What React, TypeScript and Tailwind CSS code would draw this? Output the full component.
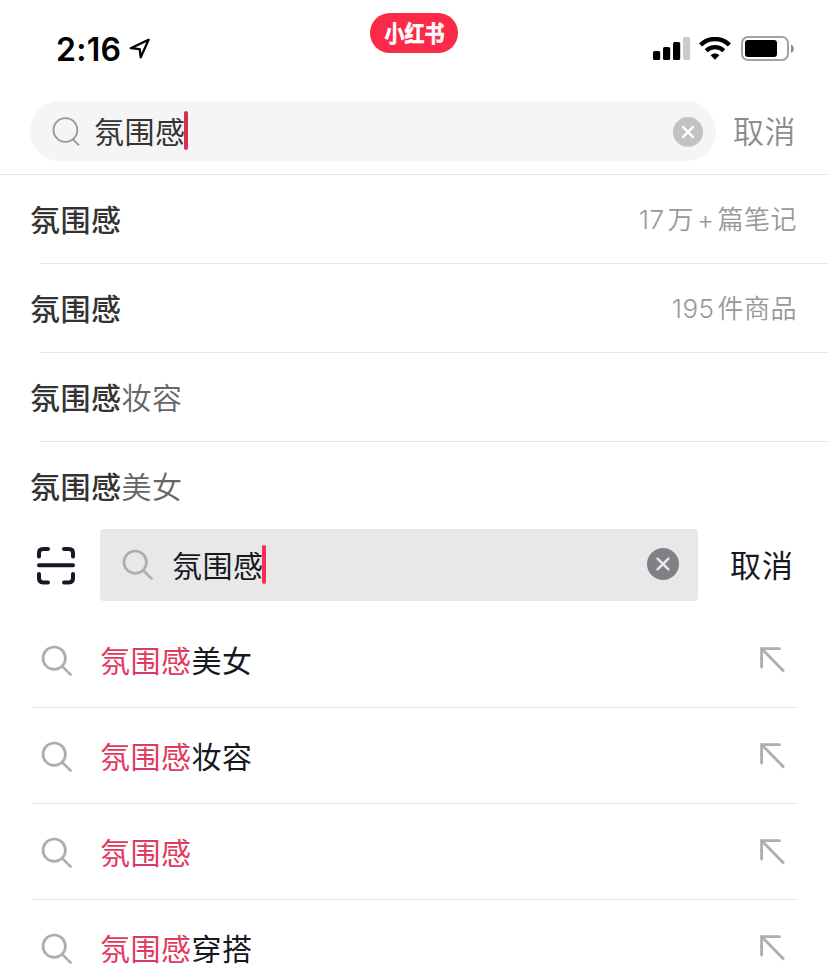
import React from 'react';

interface IconProps {
  className?: string;
}

interface TopSuggestion {
  suffix?: string;
  count?: string[];
}

const KEYWORD = '氛围感';

const topSuggestions: TopSuggestion[] = [
  { count: ['17', '万', '+', '篇笔记'] },
  { count: ['195', '件商品'] },
  { suffix: '妆容' },
  { suffix: '美女' },
];

const bottomSuggestions = ['美女', '妆容', '', '穿搭'];

const LocationIcon: React.FC<IconProps> = ({ className }) => (
  <svg className={className} width="22" height="22" viewBox="0 0 22 22" fill="none">
    <path d="M1.7 10.2 L19.6 1.8 L11.7 19.4 L10.7 11.2 Z" stroke="#000" strokeWidth="2.3" strokeLinejoin="round" />
  </svg>
);

const SignalIcon: React.FC<IconProps> = ({ className }) => (
  <svg className={className} width="38" height="24" viewBox="0 0 38 24">
    <rect x="0" y="14" width="7.2" height="9" rx="1.6" />
    <rect x="10" y="10" width="7.2" height="13" rx="1.6" />
    <rect x="20" y="5" width="7.2" height="18" rx="1.6" />
    <rect x="30" y="0" width="7.2" height="23" rx="1.6" fill="#cbcbcb" />
  </svg>
);

const WifiIcon: React.FC<IconProps> = ({ className }) => (
  <svg className={className} width="32" height="24" viewBox="0 0 32 24" fill="none">
    <path d="M1.6 8 C9.6 0 22.4 0 30.4 8" stroke="#000" strokeWidth="4.4" />
    <path d="M7.2 13.8 C12.3 9 19.7 9 24.8 13.8" stroke="#000" strokeWidth="4.2" />
    <path d="M11.6 18.2 C14 15.8 18 15.8 20.4 18.2 L16 22.8 Z" fill="#000" />
  </svg>
);

const BatteryIcon: React.FC<IconProps> = ({ className }) => (
  <svg className={className} width="54" height="26" viewBox="0 0 54 26">
    <rect x="1" y="1" width="46" height="23" rx="6" fill="none" stroke="#a3a3a3" strokeWidth="2" />
    <rect x="4" y="4" width="32" height="17" rx="3" />
    <path d="M50 8.5 C53.8 10 53.8 15.5 50 17 Z" fill="#8f8f8f" />
  </svg>
);

const ThinSearchIcon: React.FC<IconProps> = ({ className }) => (
  <svg className={className} width="28" height="30" viewBox="0 0 28 30" fill="none" stroke="#999" strokeWidth="1.9">
    <circle cx="13.4" cy="13" r="11.9" />
    <path d="M20.6 21.8 L27 28.4" />
  </svg>
);

const SearchIcon: React.FC<IconProps> = ({ className }) => (
  <svg className={className} width="32" height="32" viewBox="0 0 32 32" fill="none" stroke="#adadad" strokeWidth="2.7" strokeLinecap="round">
    <circle cx="13.2" cy="13.2" r="11.2" />
    <path d="M21.5 21.6 L29.6 29.6" />
  </svg>
);

const ClearIcon: React.FC<{ size: number; fill: string; cross: string }> = ({ size, fill, cross }) => (
  <svg width={size} height={size} viewBox="0 0 32 32">
    <circle cx="16" cy="16" r="16" fill={fill} />
    <path d="M10.6 10.6 L21.4 21.4 M21.4 10.6 L10.6 21.4" stroke={cross} strokeWidth="2.6" strokeLinecap="round" />
  </svg>
);

const ScanIcon: React.FC<IconProps> = ({ className }) => (
  <svg className={className} width="38" height="38" viewBox="0 0 38 38" fill="none" stroke="#161823" strokeWidth="4" strokeLinecap="round">
    <path d="M2 9.5 V6 Q2 2 6 2 H11" />
    <path d="M27 2 H32 Q36 2 36 6 V9.5" />
    <path d="M36 27 V31 Q36 35.4 32 35.4 H27" />
    <path d="M11 35.4 H6 Q2 35.4 2 31 V27" />
    <path d="M2 18.3 H36" />
  </svg>
);

const FillArrowIcon: React.FC<IconProps> = ({ className }) => (
  <svg className={className} width="26" height="26" viewBox="0 0 26 26" fill="none" stroke="#adadad" strokeWidth="2.8">
    <path d="M19.6 1.6 H1.6 V20" strokeLinecap="round" />
    <path d="M2 2 L24 24.4" />
  </svg>
);

const StatusBar: React.FC = () => (
  <div className="grid h-[101px] grid-cols-[1fr_88px_1fr]">
    <div className="flex h-[97px] items-center pl-[56px]">
      <span className="mt-[2px] font-[Inter] text-[32px] font-semibold leading-none tracking-[0.3px] text-black">2:16</span>
      <LocationIcon className="ml-2" />
    </div>
    <div className="mt-[13px] flex h-10 items-center justify-center rounded-full bg-[#fb2a49]">
      <span className="-mt-[2px] scale-x-[0.87] text-[23px] font-bold leading-none tracking-normal text-white [-webkit-text-stroke:0.6px_white]">小红书</span>
    </div>
    <div className="flex h-[97px] items-center justify-end pr-[33px]">
      <SignalIcon />
      <WifiIcon className="ml-[8px]" />
      <BatteryIcon className="ml-[10px]" />
    </div>
  </div>
);

const TopSearch: React.FC = () => (
  <div className="flex items-center border-b border-[#e6e6e6] pb-[13px] pl-[30px]">
    <div className="flex h-[60px] w-[686px] items-center rounded-full bg-[#f5f5f5] pl-[22px] pr-[13px]">
      <ThinSearchIcon className="mt-px" />
      <span className="-mt-[2px] ml-[14px] text-[#333]">{KEYWORD}</span>
      <span className="-ml-[2px] -mt-px h-[39px] w-1 rounded-full bg-[#db3049]" />
      <span className="ml-auto mt-[2px]">
        <ClearIcon size={30} fill="#c2c2c2" cross="#fff" />
      </span>
    </div>
    <span className="-mt-[3px] ml-[17px] text-[31px] font-[350] text-[#8c8c8c]">取消</span>
  </div>
);

const TopList: React.FC = () => (
  <ul>
    {topSuggestions.map((item, i) => (
      <li key={i} className="group">
        <div className="flex h-[88px] items-center justify-between pl-[30px] pr-[31px] group-last:h-[87px] group-last:pt-px">
          <span className="-mt-[2px]">
            <span className="font-medium text-[#333]">{KEYWORD}</span>
            {item.suffix && <span className="font-[350] text-[#666]">{item.suffix}</span>}
          </span>
          {item.count && (
            <span className="mt-[2px] flex gap-[3px] text-[26px] font-[350] tracking-[0.5px] text-[#999]">
              {item.count.map((part) => (
                <span key={part} className="font-[Inter,'Noto_Sans_CJK_SC',sans-serif]">{part}</span>
              ))}
            </span>
          )}
        </div>
        <div className="ml-10 h-px bg-[#e6e6e6] group-last:hidden" />
      </li>
    ))}
  </ul>
);

const BottomSearch: React.FC = () => (
  <div className="flex h-[72px] items-center pl-[37px]">
    <ScanIcon className="mt-[2px]" />
    <div className="ml-[25px] flex h-full w-[598px] items-center rounded bg-[#e8e8e8] pl-[22px] pr-[19px]">
      <SearchIcon />
      <span className="-mt-[2px] ml-[18px] text-[#161823]">{KEYWORD}</span>
      <span className="-ml-[2px] -mt-px h-[39px] w-1 rounded-full bg-[#fe2c55]" />
      <span className="mb-[2px] ml-auto">
        <ClearIcon size={32} fill="#808186" cross="#e8e8e8" />
      </span>
    </div>
    <span className="-mt-[3px] ml-8 text-[31px] tracking-[1px] text-[#161823]">取消</span>
  </div>
);

const BottomList: React.FC = () => (
  <ul className="px-8 pt-[11px]">
    {bottomSuggestions.map((suffix) => (
      <li key={suffix} className="flex h-24 items-center border-b border-[#e5e5e5] pl-[9px] pr-[10px]">
        <SearchIcon className="mt-[2px]" />
        <span className="-mt-px ml-[27px] text-[#161823]">
          <span className="text-[#e0395f]">{KEYWORD}</span>
          {suffix}
        </span>
        <FillArrowIcon className="ml-auto" />
      </li>
    ))}
  </ul>
);

function App() {
  return (
    <div className="h-[980px] w-[828px] overflow-hidden whitespace-nowrap bg-white font-['Noto_Sans_CJK_SC',sans-serif] text-[30px] leading-none tracking-[0.5px]">
      <StatusBar />
      <TopSearch />
      <TopList />
      <BottomSearch />
      <BottomList />
    </div>
  );
}

export default App;
